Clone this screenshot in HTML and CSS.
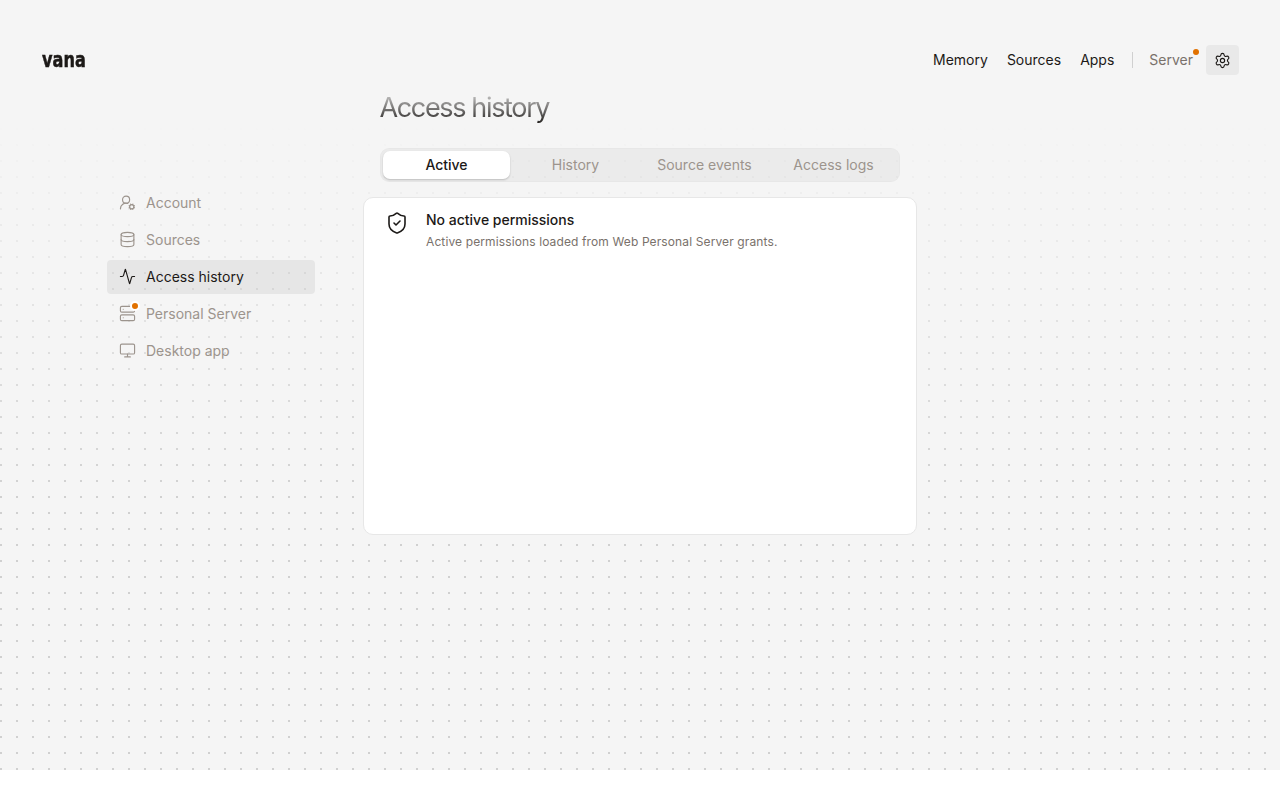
FILE: index.html
```
<!DOCTYPE html>
<html lang="en">
<head>
    <meta charset="UTF-8">
    <meta name="viewport" content="width=device-width, initial-scale=1.0">
    <title>Access history - vana</title>
    <link rel="stylesheet" href="styles.css">
</head>
<body>
    <div class="page">
        <header class="header">
            <a class="logo">vana</a>
            <nav class="nav">
                <a>Memory</a>
                <a>Sources</a>
                <a>Apps</a>
                <span class="divider"></span>
                <a class="server">Server<span class="dot"></span></a>
                <button class="settings" aria-label="Settings">
                    <svg class="icon" viewBox="0 0 24 24"><path d="M9.671 4.136a2.34 2.34 0 0 1 4.659 0 2.34 2.34 0 0 0 3.319 1.915 2.34 2.34 0 0 1 2.33 4.033 2.34 2.34 0 0 0 0 3.831 2.34 2.34 0 0 1-2.33 4.033 2.34 2.34 0 0 0-3.319 1.915 2.34 2.34 0 0 1-4.659 0 2.34 2.34 0 0 0-3.32-1.915 2.34 2.34 0 0 1-2.33-4.033 2.34 2.34 0 0 0 0-3.831A2.34 2.34 0 0 1 6.35 6.051a2.34 2.34 0 0 0 3.319-1.915"/><circle cx="12" cy="12" r="3"/></svg>
                </button>
            </nav>
        </header>

        <div class="layout">
            <aside class="sidebar">
                <a class="item">
                    <svg class="icon" viewBox="0 0 24 24"><path d="M2 21a8 8 0 0 1 10.434-7.62"/><circle cx="10" cy="8" r="5"/><circle cx="18" cy="18" r="3"/><path d="m19.5 14.3-.4.9M16.9 20.8l-.4.9M21.7 19.5l-.9-.4M15.2 16.9l-.9-.4M21.7 16.5l-.9.4M15.2 19.1l-.9.4M19.5 21.7l-.4-.9M16.9 15.2l-.4-.9"/></svg>
                    Account
                </a>
                <a class="item">
                    <svg class="icon" viewBox="0 0 24 24"><ellipse cx="12" cy="5" rx="9" ry="3"/><path d="M3 5v14a9 3 0 0 0 18 0V5"/><path d="M3 12a9 3 0 0 0 18 0"/></svg>
                    Sources
                </a>
                <a class="item active">
                    <svg class="icon" viewBox="0 0 24 24"><path d="M22 12h-2.48a2 2 0 0 0-1.93 1.46l-2.35 8.36a.25.25 0 0 1-.48 0L9.24 2.18a.25.25 0 0 0-.48 0l-2.35 8.36A2 2 0 0 1 4.49 12H2"/></svg>
                    Access history
                </a>
                <a class="item">
                    <span class="badged">
                        <svg class="icon" viewBox="0 0 24 24"><rect x="2" y="2" width="20" height="8" rx="2"/><rect x="2" y="14" width="20" height="8" rx="2"/><path d="M6 6h.01M6 18h.01"/></svg>
                        <span class="dot ringed"></span>
                    </span>
                    Personal Server
                </a>
                <a class="item">
                    <svg class="icon" viewBox="0 0 24 24"><rect x="2" y="3" width="20" height="14" rx="2"/><path d="M8 21h8M12 17v4"/></svg>
                    Desktop app
                </a>
            </aside>

            <main class="content">
                <h1>Access history</h1>
                <div class="tabs">
                    <button class="tab selected">Active</button>
                    <button class="tab">History</button>
                    <button class="tab">Source events</button>
                    <button class="tab">Access logs</button>
                </div>
                <section class="card">
                    <svg class="icon shield" viewBox="0 0 24 24"><path d="M20 13c0 5-3.5 7.5-7.66 8.95a1 1 0 0 1-.67-.01C7.5 20.5 4 18 4 13V6a1 1 0 0 1 1-1c2 0 4.5-1.2 6.24-2.72a1.17 1.17 0 0 1 1.52 0C14.51 3.81 17 5 19 5a1 1 0 0 1 1 1z"/><path d="m9 12 2 2 4-4"/></svg>
                    <div>
                        <h2>No active permissions</h2>
                        <p>Active permissions loaded from Web Personal Server grants.</p>
                    </div>
                </section>
            </main>
        </div>
    </div>
</body>
</html>
```
FILE: styles.css
```
* {
    margin: 0;
    padding: 0;
    box-sizing: border-box;
}

body {
    font-family: Inter, sans-serif;
    font-size: 14px;
    line-height: 20px;
    color: #1c1917;
    background: #fff;
}

button {
    font: inherit;
    border: none;
    background: none;
}

/* dot grid that fades in from the top */
.page {
    height: 770px;
    background:
        linear-gradient(#f5f5f5 120px, rgba(245, 245, 245, 0) 500px),
        linear-gradient(90deg, transparent 2px, #f5f5f5 2px) 0 0 / 16px 16px,
        linear-gradient(#d0d0d0 2px, #f5f5f5 2px) 0 0 / 16px 16px;
}

.header {
    display: flex;
    align-items: center;
    justify-content: space-between;
    height: 90px;
    padding: 30px 41px 0;
}

.logo {
    margin-left: 1px;
    font-family: "DejaVu Sans", sans-serif;
    font-size: 21px;
    font-weight: 700;
    line-height: 28px;
    -webkit-text-stroke: 0.5px #1c1917;
    transform: scaleX(0.77);
    transform-origin: left center;
}

.nav {
    display: flex;
    align-items: center;
    gap: 19px;
}

.divider {
    width: 1px;
    height: 16px;
    margin: 0 -3px 0 -1px;
    background: #d0d0d0;
}

.server {
    position: relative;
    color: #79716b;
}

.dot {
    position: absolute;
    top: -1px;
    right: -6px;
    width: 6px;
    height: 6px;
    border-radius: 50%;
    background: #e17100;
}

.settings {
    display: flex;
    align-items: center;
    justify-content: center;
    width: 33px;
    height: 30px;
    margin-left: -6px;
    border-radius: 4px;
    background: #e9e9e9;
    color: #1c1917;
}

.icon {
    display: block;
    flex: none;
    width: 17px;
    height: 17px;
    fill: none;
    stroke: currentColor;
    stroke-width: 1.6;
    stroke-linecap: round;
    stroke-linejoin: round;
}

.layout {
    display: flex;
    padding-left: 107px;
}

.sidebar {
    display: flex;
    flex-direction: column;
    gap: 3px;
    width: 208px;
    padding-top: 96px;
}

.item {
    display: flex;
    align-items: center;
    gap: 10px;
    height: 34px;
    padding: 0 12px;
    border-radius: 4px;
    color: #9c948d;
}

.item > .icon,
.badged {
    margin-bottom: 1px;
}

.item.active {
    color: #1c1917;
    background: rgba(0, 0, 0, 0.06);
}

.badged {
    position: relative;
}

.ringed {
    top: -4px;
    right: -4px;
    width: 10px;
    height: 10px;
    border: 2px solid #fff;
}

.content {
    width: 554px;
    margin-left: 48px;
}

h1 {
    width: max-content;
    margin-left: 16.5px;
    padding: 0 2px 1px 0;
    font-size: 27px;
    font-weight: 400;
    line-height: 36px;
    letter-spacing: -0.05em;
    color: transparent;
    background: linear-gradient(#dcdcdc 0, #1c1917 94%);
    background-clip: text;
    -webkit-background-clip: text;
}

.tabs {
    display: grid;
    grid-template-columns: repeat(4, 1fr);
    gap: 2px;
    height: 34px;
    margin: 21px 17px 15px;
    padding: 2px;
    border: 1px solid rgba(0, 0, 0, 0.02);
    border-radius: 9px;
    background: rgba(0, 0, 0, 0.04);
}

.tab {
    color: #9c948d;
}

.tab.selected {
    border-radius: 7px;
    font-weight: 500;
    color: #1c1917;
    background: #fff;
    box-shadow: 0 1px 2px rgba(0, 0, 0, 0.2);
}

.card {
    display: flex;
    gap: 17px;
    height: 338px;
    padding: 12px 21px;
    border: 1px solid #e7e7e7;
    border-radius: 10px;
    background: #fff;
}

.shield {
    width: 24px;
    height: 24px;
    margin-top: 1px;
}

h2 {
    font-size: 14px;
    font-weight: 500;
    line-height: 20px;
}

.card p {
    margin-top: 2px;
    font-size: 12px;
    letter-spacing: 0.01em;
    color: #79716b;
}
```
